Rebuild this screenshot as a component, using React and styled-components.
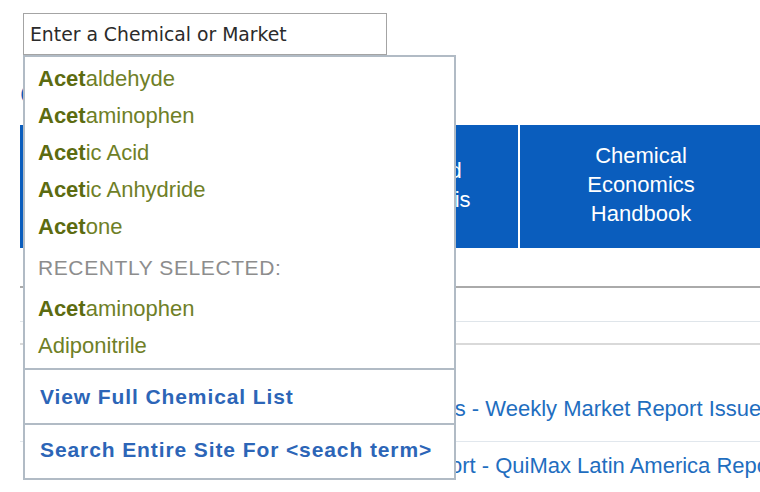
import styled, { createGlobalStyle } from 'styled-components'

const GlobalStyle = createGlobalStyle`
body {
    margin: 0;
    background: #fff;
    font-family: "Liberation Sans", Arial, sans-serif;
}
`

const Page = styled.div`
width: 760px;
height: 492px;
overflow: hidden;
box-sizing: border-box;
padding: 13px 0 0 20px;
`

const SearchArea = styled.div`
position: relative;
z-index: 2;
margin-left: 3px;
width: 364px;
`

const SearchInput = styled.input`
box-sizing: border-box;
display: block;
width: 100%;
height: 42px;
margin: 0;
border: 1px solid #a4a4a4;
padding: 0 6px;
font: 18.8px "DejaVu Sans", Verdana, sans-serif;
color: #2b2b2b;
outline: none;
&::placeholder {
    color: #2b2b2b;
}
`

const Dropdown = styled.div`
position: absolute;
top: 42px;
left: 0;
width: 433px;
box-sizing: border-box;
background: #fff;
border: 2px solid #b1bbc5;
`

const Group = styled.div`
padding: 3px 0 4px;
border-bottom: 2px solid #b1bbc5;
`

const Item = styled.div`
height: 37px;
display: flex;
align-items: center;
padding-left: 13px;
font-size: 22px;
color: #6f7f27;
b {
    color: #5c6b10;
}
`

const GroupLabel = styled.div`
height: 45px;
display: flex;
align-items: center;
padding-left: 13px;
font-size: 21px;
letter-spacing: 0.6px;
color: #8d8d8d;
`

const Action = styled.div`
height: ${p => p.$h}px;
display: flex;
align-items: center;
padding: 0 0 ${p => p.$pb || 0}px 15px;
font-size: 21px;
font-weight: bold;
letter-spacing: 0.9px;
color: #2c65b7;
border-bottom: ${p => (p.$last ? 'none' : '2px solid #b1bbc5')};
`

const Heading = styled.h1`
margin: 0 0 14px;
padding-top: 24px;
font-size: 28px;
line-height: 32px;
font-weight: normal;
color: #0a5dbd;
white-space: nowrap;
`

const TabRow = styled.div`
display: flex;
gap: 2px;
height: 123px;
`

const Tab = styled.div`
flex: 0 0 ${p => p.$w}px;
display: flex;
align-items: center;
justify-content: center;
box-sizing: border-box;
padding-bottom: 4px;
text-align: center;
background: #0a5dbd;
color: #fff;
font-size: 22px;
line-height: 29px;
`

const SubNav = styled.div`
height: 38px;
border-bottom: 2px solid #aaaaaa;
`

const FilterRow = styled.div`
height: ${p => p.$h}px;
border-bottom: ${p => p.$b};
`

const List = styled.div`
margin-top: 40px;
`

const ListRow = styled.div`
padding: 12px 0 20px 57px;
line-height: 24px;
font-size: 22px;
color: #1f6ebf;
white-space: nowrap;
border-bottom: 1px solid #e1e7ed;
`

const suggestions = ['aldehyde', 'aminophen', 'ic Acid', 'ic Anhydride', 'one']

function App() {
    return (
        <Page>
            <GlobalStyle />
            <SearchArea>
                <SearchInput placeholder='Enter a Chemical or Market' />
                <Dropdown>
                    <Group>
                        {suggestions.map(rest => (
                            <Item key={rest}><b>Acet</b>{rest}</Item>
                        ))}
                        <GroupLabel>RECENTLY SELECTED:</GroupLabel>
                        <Item><b>Acet</b>aminophen</Item>
                        <Item>Adiponitrile</Item>
                    </Group>
                    <Action $h={53}>View Full Chemical List</Action>
                    <Action $h={50} $pb={3} $last>Search Entire Site For &lt;seach term&gt;</Action>
                </Dropdown>
            </SearchArea>
            <Heading>Chemicals &amp; Markets</Heading>
            <TabRow>
                <Tab $w={184}>Market<br />Overview</Tab>
                <Tab $w={312}>Chemical Industry<br />Supply and Demand<br />World Market Analysis<br />Reports</Tab>
                <Tab $w={242}>Chemical<br />Economics<br />Handbook</Tab>
                <Tab $w={242}>Process<br />Economics</Tab>
            </TabRow>
            <SubNav />
            <FilterRow $h={33} $b='1px solid #dfe5ea' />
            <FilterRow $h={21} $b='2px solid #d9d9d9' />
            <List>
                <ListRow>Americas Chemical Markets &amp; Statistics - Weekly Market Report Issue 1024</ListRow>
                <ListRow>Latin America Chemicals Industry Report - QuiMax Latin America Report</ListRow>
            </List>
        </Page>
    )
}

export default App
